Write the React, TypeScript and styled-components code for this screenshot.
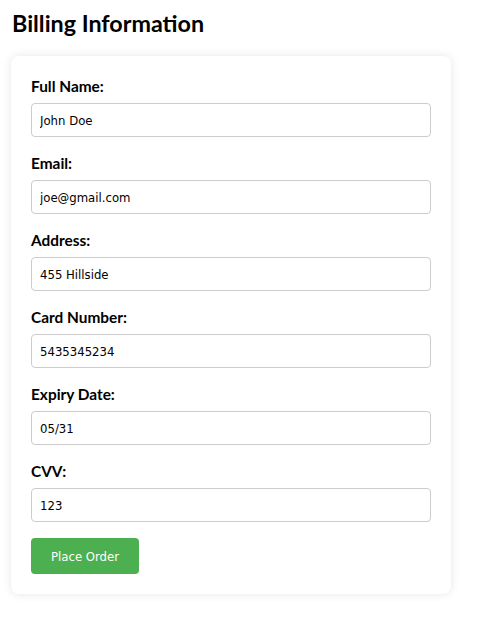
import * as React from 'react';
import { useState } from 'react';
import styled, { createGlobalStyle } from 'styled-components';

const fields = [
  { key: 'name', label: 'Full Name:', value: 'John Doe' },
  { key: 'email', label: 'Email:', value: 'joe@gmail.com' },
  { key: 'address', label: 'Address:', value: '455 Hillside' },
  { key: 'card', label: 'Card Number:', value: '5435345234' },
  { key: 'expiry', label: 'Expiry Date:', value: '05/31' },
  { key: 'cvv', label: 'CVV:', value: '123' },
];

export default function App() {
  const [values, setValues] = useState<Record<string, string>>(
    Object.fromEntries(fields.map((f) => [f.key, f.value]))
  );

  return (
    <>
      <GlobalStyle />
      <Page>
        <Title>Billing Information</Title>
        <Card onSubmit={(e) => e.preventDefault()}>
          {fields.map((f) => (
            <Field key={f.key}>
              <Label htmlFor={f.key}>{f.label}</Label>
              <Input
                id={f.key}
                value={values[f.key]}
                onChange={(e) => setValues({ ...values, [f.key]: e.target.value })}
              />
            </Field>
          ))}
          <SubmitButton type="submit">Place Order</SubmitButton>
        </Card>
      </Page>
    </>
  );
}

const GlobalStyle = createGlobalStyle`
  * {
    box-sizing: border-box;
  }
  body {
    margin: 0;
    background: #fff;
    font-family: Lato, 'Noto Sans', sans-serif;
    color: #000;
  }
`;

const Page = styled.div`
  padding: 10px 44px 30px 11px;
`;

const Title = styled.h2`
  margin: 0 0 20px 1px;
  font-size: 23.3px;
  line-height: 26px;
  font-weight: 700;
`;

const Card = styled.form`
  width: 440px;
  padding: 20px;
  background: #fff;
  border-radius: 8px;
  box-shadow: 0 0 10px rgba(0, 0, 0, 0.1);
`;

const Field = styled.div`
  display: flex;
  flex-direction: column;
  margin-bottom: 16px;
`;

const Label = styled.label`
  font-size: 15.4px;
  line-height: 20px;
  font-weight: 700;
  margin-bottom: 7px;
`;

const Input = styled.input`
  width: 100%;
  height: 34px;
  padding: 0 8px;
  border: 1px solid #ccc;
  border-radius: 4px;
  font-family: 'DejaVu Sans Condensed', 'DejaVu Sans', sans-serif;
  font-size: 13px;
  color: #000;
  outline: none;
`;

const SubmitButton = styled.button`
  display: block;
  margin-top: 1px;
  height: 36px;
  padding: 0 20px;
  border: none;
  border-radius: 4px;
  background: #4caf50;
  color: #fff;
  font-family: 'DejaVu Sans Condensed', 'DejaVu Sans', sans-serif;
  font-size: 13px;
  cursor: pointer;
`;
